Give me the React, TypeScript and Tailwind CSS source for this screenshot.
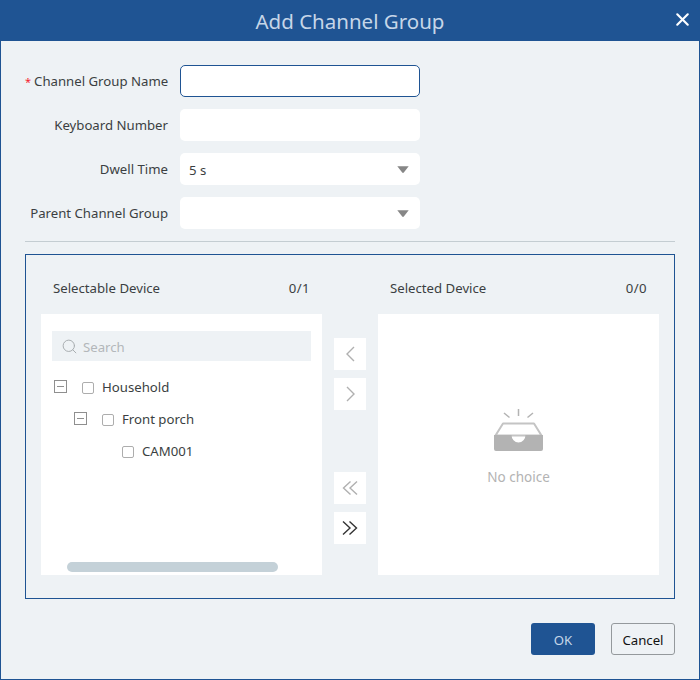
import React from 'react';
import { X, Search } from 'lucide-react';

const inputBox = 'w-[240px] h-8 bg-white rounded-[5px]';

const Caret = () => (
  <svg width="12" height="7" viewBox="0 0 12 7" className="text-[#868686]">
    <path d="M0.3 0.3h11.400L7 6.300a1.300 1.300 0 0 1-2 0z" fill="currentColor" />
  </svg>
);

const Arrow = ({ d, color }: { d: string; color: string }) => (
  <svg width="16" height="16" viewBox="0 0 16 16" fill="none" stroke={color} strokeWidth="1.400">
    <path d={d} />
  </svg>
);

const Field = ({ label, required, children }: { label: string; required?: boolean; children: React.ReactNode }) => (
  <div className="flex items-center">
    <label className="w-[143px] mr-3 pt-[2px] text-right text-[13.2px] text-[#3b3f42] whitespace-nowrap">
      {required && <span className="text-[11px] text-[#f5222d] mr-[3px]">*</span>}
      {label}
    </label>
    {children}
  </div>
);

const SelectBox = ({ value }: { value?: string }) => (
  <div className={`${inputBox} flex items-center justify-between pl-[9px] pr-[11px] text-[13.2px] text-[#3b3f42]`}>
    <span className="pt-[3px]">{value}</span>
    <Caret />
  </div>
);

const MoveButton = ({ children }: { children: React.ReactNode }) => (
  <button className="w-8 h-8 bg-white flex items-center justify-center">{children}</button>
);

const Check = () => <span className="w-3 h-3 shrink-0 mt-[1px] bg-white border border-[#adadad] rounded-[2px]" />;

const Toggle = () => (
  <span className="w-[13px] h-[13px] shrink-0 border border-[#8f8f8f] flex items-center justify-center -mt-[1px]">
    <span className="w-[7px] h-px bg-[#8f8f8f]" />
  </span>
);

const PanelHead = ({ title, count }: { title: string; count: string }) => (
  <div className="w-[281px] flex items-center justify-between px-3 pt-[2px] h-[28px] text-[13.2px] text-[#3b3f42]">
    <span>{title}</span>
    <span className="tracking-[0.4px]">{count}</span>
  </div>
);

export default function App() {
  return (
    <div className="w-[700px] h-[680px] flex flex-col bg-[#eef2f5] border border-[#1f5493] border-t-0 font-['Noto_Sans','Open_Sans',sans-serif]">
      <header className="relative h-[41px] -mx-px shrink-0 bg-[#1f5493] flex items-center justify-center pt-[2px] text-[20.5px] text-[#c6d6e8]">
        Add Channel Group
        <X size={21} strokeWidth={2.4} className="absolute right-[7px] top-[9px] text-white" />
      </header>

      <div className="flex-1 flex flex-col px-6 pt-6">
        <div className="flex flex-col gap-3">
          <Field label="Channel Group Name" required>
            <input className={`${inputBox} border border-[#1f5493] outline-none`} />
          </Field>
          <Field label="Keyboard Number">
            <input className={`${inputBox} outline-none`} />
          </Field>
          <Field label="Dwell Time">
            <SelectBox value="5 s" />
          </Field>
          <Field label="Parent Channel Group">
            <SelectBox />
          </Field>
        </div>

        <div className="h-px bg-[#c4cdd2] mt-3 mb-3" />

        <section className="h-[345px] border border-[#1f5493] px-[15px] pt-[19px]">
          <div className="flex justify-between">
            <PanelHead title="Selectable Device" count="0/1" />
            <PanelHead title="Selected Device" count="0/0" />
          </div>
          <div className="flex mt-[12px]">
            <div className="w-[281px] h-[261px] bg-white flex flex-col px-[11px] pt-[17px] pb-[3px]">
              <div className="h-[30px] bg-[#eef2f5] flex items-center pl-[9px] gap-[5px] text-[13.2px] text-[#b3b7ba]">
                <Search size={17} strokeWidth={1.400} className="text-[#a8adb0]" />
                <span className="pt-[3px]">Search</span>
              </div>
              <div className="flex-1 mt-[10px] text-[13.2px] text-[#3b3f42]">
                <div className="h-8 flex items-center pl-[2px]">
                  <Toggle />
                  <span className="w-[15px]" />
                  <Check />
                  <span className="ml-2 pt-[1px]">Household</span>
                </div>
                <div className="h-8 flex items-center pl-[22px]">
                  <Toggle />
                  <span className="w-[15px]" />
                  <Check />
                  <span className="ml-2 pt-[1px]">Front porch</span>
                </div>
                <div className="h-8 flex items-center pl-[70px]">
                  <Check />
                  <span className="ml-2 pt-[1px]">CAM001</span>
                </div>
              </div>
              <div className="ml-[15px] w-[211px] h-[10px] rounded-[5px] bg-[#c4d1d8]" />
            </div>

            <div className="w-[56px] flex flex-col items-center pt-6">
              <div className="flex flex-col gap-2">
                <MoveButton><Arrow d="M12 1L5 8l7 7" color="#b0b0b0" /></MoveButton>
                <MoveButton><Arrow d="M5 1l7 7-7 7" color="#b0b0b0" /></MoveButton>
              </div>
              <div className="flex flex-col gap-2 mt-[62px]">
                <MoveButton><Arrow d="M8.500 1.500L1.500 8l7 6.500M15 1.500L8 8l7 6.500" color="#b0b0b0" /></MoveButton>
                <MoveButton><Arrow d="M1 1.500L8 8l-7 6.500M7.500 1.500L14.500 8l-7 6.500" color="#333333" /></MoveButton>
              </div>
            </div>

            <div className="w-[281px] h-[261px] bg-white flex flex-col items-center pt-[95px]">
              <svg width="49" height="42" viewBox="0 0 49 42">
                <path d="M24.500 0v7M10 4l5.500 4.500M39 4l-5.500 4.500" stroke="#b3b3b3" strokeWidth="1.500" fill="none" />
                <path d="M9 14.500h31l7.500 12h-46z" fill="none" stroke="#c4c4c4" strokeWidth="2" strokeLinejoin="round" />
                <path d="M0 26h17.500a7 7.500 0 0 0 14 0H49v14a2 2 0 0 1-2 2H2a2 2 0 0 1-2-2z" fill="#b3b3b3" />
              </svg>
              <span className="mt-[16px] text-[13.5px] text-[#b3b3b3]">No choice</span>
            </div>
          </div>
        </section>

        <div className="flex justify-end gap-4 mt-6">
          <button className="w-16 h-8 pt-[3px] rounded-[3px] bg-[#1f5493] text-[13.2px] text-[#c6d6e8]">OK</button>
          <button className="w-16 h-8 pt-[3px] rounded-[3px] border border-[#94999c] text-[13.2px] text-[#111111]">Cancel</button>
        </div>
      </div>
    </div>
  );
}
